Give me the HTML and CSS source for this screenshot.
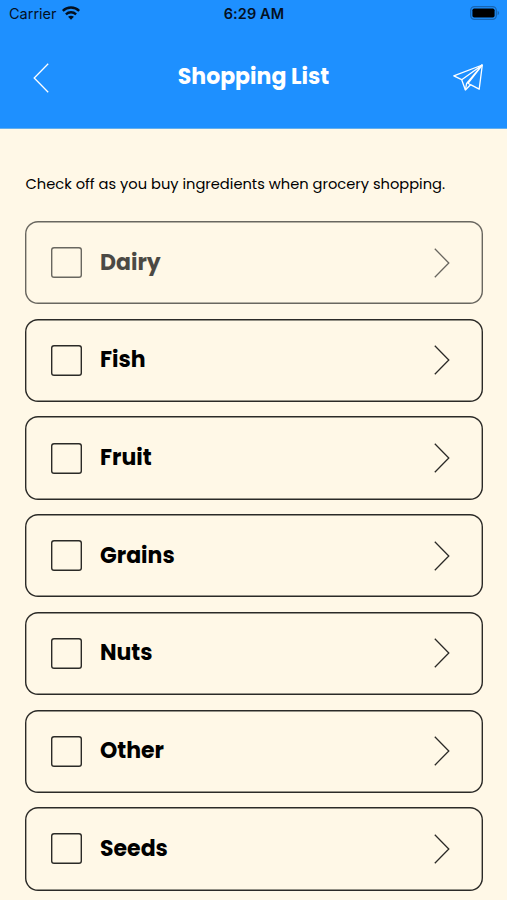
FILE: index.html
```html
<!DOCTYPE html>
<html lang="en">
<head>
    <meta charset="UTF-8">
    <meta name="viewport" content="width=device-width, initial-scale=1.0">
    <title>Shopping List</title>
    <link rel="stylesheet" href="styles.css">
</head>
<body>
    <header class="header">
        <div class="status-bar">
            <div class="carrier">
                <span>Carrier</span>
                <svg class="wifi" viewBox="0 0 18 14" fill="none" stroke="#04101f" stroke-width="2.4">
                    <path d="M.8 4.800C5.300.4 12.700.4 17.200 4.800"/>
                    <path d="M3.900 8.300c2.900-2.700 7.300-2.700 10.200 0"/>
                    <path d="M6.100 10.800c1.700-1.500 4.100-1.500 5.800 0L9 13.700z" fill="#04101f" stroke="none"/>
                </svg>
            </div>
            <span class="time">6:29 AM</span>
            <div class="battery-wrap">
                <svg class="battery" viewBox="0 0 30 14">
                    <rect x=".7" y=".7" width="25.600" height="12.600" rx="3.800" fill="none" stroke="#1765b3" stroke-width="1.300"/>
                    <rect x="2.400" y="2.400" width="22.200" height="9.200" rx="1.800" fill="#000"/>
                    <path d="M27.600 4.800c2 .8 2 3.600 0 4.400z" fill="#1765b3"/>
                </svg>
            </div>
        </div>
        <nav class="nav-bar">
            <svg class="back" viewBox="0 0 16 30"><path d="M15.200.8 1.200 15l14 14.200"/></svg>
            <h1 class="title">Shopping List</h1>
            <svg class="send" viewBox="0 0 32 30">
                <path d="M30.300 2 1.800 12.800l7.900 3.900L13.400 27l5.100-5.300 8.700 4.500z"/>
                <path d="M30.300 2 9.700 16.700M30.300 2 14.600 20.300 13.400 27M30.300 2 16 20.300l2.500 1.400"/>
            </svg>
        </nav>
    </header>

    <main class="content">
        <p class="intro">Check off as you buy ingredients when grocery shopping.</p>
        <ul class="list" id="list"></ul>
    </main>

    <script>
        const categories = [
            { name: 'Dairy', pressed: true },
            { name: 'Fish' },
            { name: 'Fruit' },
            { name: 'Grains' },
            { name: 'Nuts' },
            { name: 'Other' },
            { name: 'Seeds' }
        ];

        document.getElementById('list').innerHTML = categories.map(c => `
            <li class="card${c.pressed ? ' pressed' : ''}">
                <span class="checkbox"></span>
                <span class="label">${c.name}</span>
                <svg class="arrow" viewBox="0 0 16 30"><path d="M.8.8 14.800 15 .8 29.200"/></svg>
            </li>
        `).join('');
    </script>
</body>
</html>
```
FILE: styles.css
```css
* {
    margin: 0;
    padding: 0;
    box-sizing: border-box;
}

body {
    height: 900px;
    overflow: hidden;
    background: #fff8e7;
    color: #000;
    font-family: Poppins, Inter, sans-serif;
}

.header {
    height: 129px;
    background: #1e90ff;
    border-bottom: 1px solid #64afed;
}

.status-bar {
    display: grid;
    grid-template-columns: 1fr auto 1fr;
    align-items: center;
    height: 27px;
    padding: 0 7px 0 9px;
    font-family: Inter, sans-serif;
    font-size: 14.5px;
    color: #04101f;
}

.carrier {
    display: flex;
    align-items: center;
    gap: 5px;
}

.wifi {
    width: 18px;
    height: 14px;
    margin-bottom: 1px;
}

.time {
    margin-left: -1px;
    font-weight: 600;
    letter-spacing: 0.1px;
}

.battery-wrap {
    display: flex;
    justify-content: flex-end;
}

.battery {
    width: 30px;
    height: 14px;
    margin-bottom: 1px;
}

.nav-bar {
    display: grid;
    grid-template-columns: 32px 1fr 32px;
    align-items: center;
    height: 101px;
    padding: 0 23px 0 33px;
}

.back,
.arrow {
    width: 16px;
    height: 30px;
    fill: none;
    stroke: #fff;
    stroke-width: 1.3;
}

.title {
    margin: 0 10px 2px 0;
    font-size: 22px;
    font-weight: 700;
    text-align: center;
    color: #fff;
}

.send {
    width: 32px;
    height: 30px;
    fill: none;
    stroke: #fff;
    stroke-width: 1.3;
    stroke-linejoin: round;
}

.content {
    padding: 44px 24.5px 0 25px;
}

.intro {
    height: 47.9px;
    padding-left: 0.5px;
    font-size: 14.67px;
    line-height: 22px;
    white-space: nowrap;
}

.list {
    display: grid;
    gap: 14.45px;
    list-style: none;
}

.card {
    display: flex;
    align-items: center;
    height: 83.3px;
    padding: 0 32.5px 0 26px;
    border-radius: 13px;
    box-shadow: inset 0 0 0 1.4px #2b2a27;
}

.checkbox {
    width: 31px;
    height: 31px;
    border-radius: 3px;
    box-shadow: inset 0 0 0 1.4px #2b2a27;
}

.label {
    flex: 1;
    margin: 0 0 1px 18px;
    font-size: 22px;
    font-weight: 700;
}

.arrow {
    stroke: #2b2a27;
}

.pressed {
    opacity: 0.7;
}
```
